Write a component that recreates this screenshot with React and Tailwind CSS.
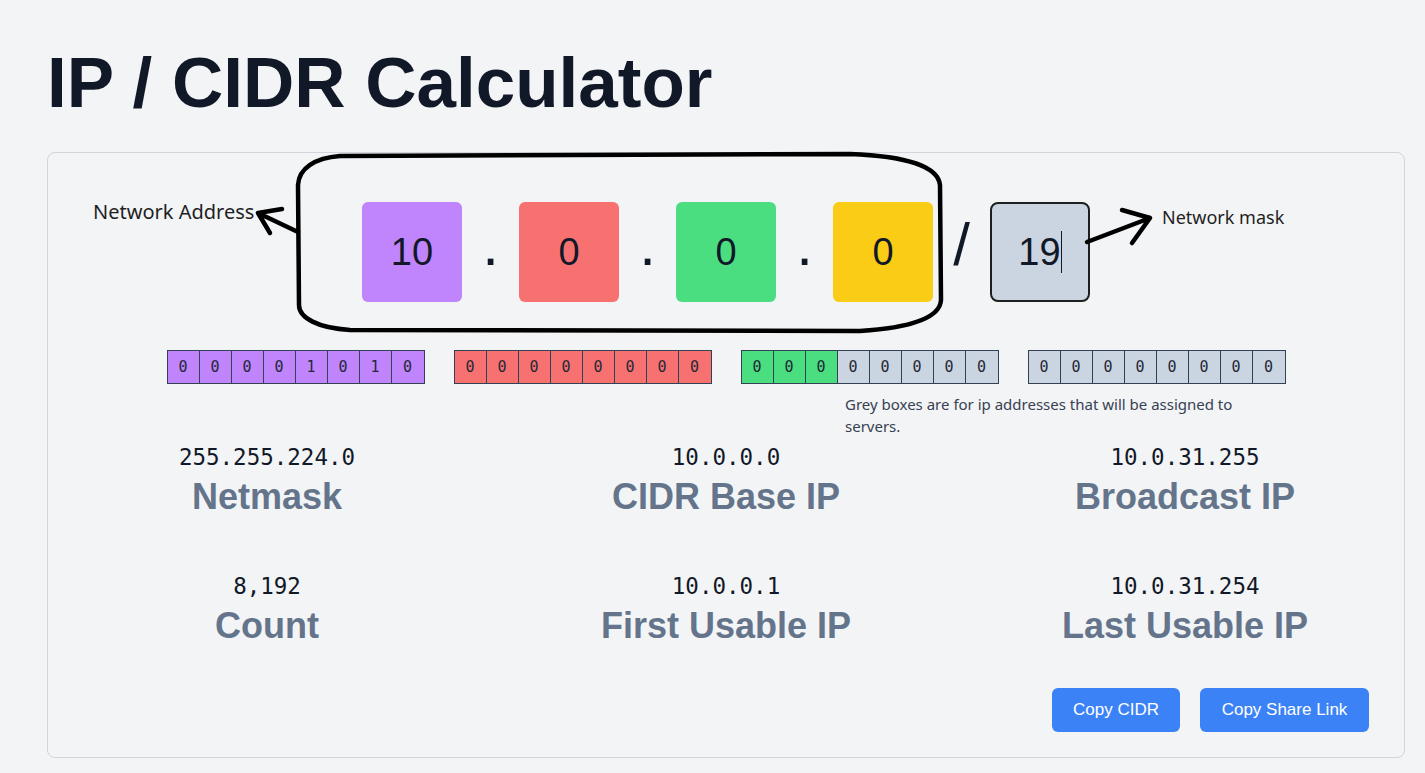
import React from 'react';

const octets = [
    { value: '10', bg: 'bg-[#c084fc]' },
    { value: '0', bg: 'bg-[#f87171]' },
    { value: '0', bg: 'bg-[#4ade80]' },
    { value: '0', bg: 'bg-[#facc15]' },
];

const toBits = (n) => n.toString(2).padStart(8, '0').split('');

const results = [
    { value: '255.255.224.0', label: 'Netmask' },
    { value: '10.0.0.0', label: 'CIDR Base IP' },
    { value: '10.0.31.255', label: 'Broadcast IP' },
    { value: '8,192', label: 'Count' },
    { value: '10.0.0.1', label: 'First Usable IP' },
    { value: '10.0.31.254', label: 'Last Usable IP' },
];

const Separator = ({ children }) => (
    <div className="w-[57px] mb-[14px] text-center text-6xl leading-none text-[#111827]">
        {children}
    </div>
);

const App = () => {
    const mask = 19;

    return (
        <div
            className="relative min-h-[773px] bg-[#f3f4f6] pl-[47px] pr-[20px] pt-[47px]"
            style={{ fontFamily: '"Liberation Sans", Arial, sans-serif' }}
        >
            <h1 className="text-[71px] leading-[72px] font-bold text-[#111827]">IP / CIDR Calculator</h1>

            <div className="mt-[33px] rounded-lg border border-[#d1d5db] px-[35px] pt-[49px] pb-[25px]">
                {/* Octet inputs */}
                <div className="flex items-center justify-center">
                    {octets.map((o, i) => (
                        <React.Fragment key={i}>
                            {i > 0 && <Separator>.</Separator>}
                            <div className={`w-[100px] h-[100px] rounded-md ${o.bg} flex items-center justify-center text-[38px] leading-none text-[#111827]`}>
                                {o.value}
                            </div>
                        </React.Fragment>
                    ))}
                    <Separator>/</Separator>
                    <div className="w-[100px] h-[100px] rounded-lg border-2 border-[#1f1f1f] bg-[#cbd5e1] flex items-center justify-center text-[38px] leading-none text-[#111827]">
                        <span>{mask}</span>
                        <span className="w-px h-[42px] bg-[#111827]"></span>
                    </div>
                </div>

                {/* Bits */}
                <div
                    className="mt-12 flex justify-center gap-[29px]"
                    style={{ fontFamily: '"DejaVu Sans Mono", monospace' }}
                >
                    {octets.map((o, i) => (
                        <div key={i} className="flex border border-[#334155]">
                            {toBits(parseInt(o.value, 10)).map((b, j) => {
                                const pos = i * 8 + j;
                                const color = pos < mask ? o.bg : 'bg-[#cbd5e1]';
                                return (
                                    <div
                                        key={j}
                                        className={`w-8 h-8 flex items-center justify-center text-[15px] text-[#1f2937] ${color} ${j < 7 ? 'border-r border-[#334155]' : ''}`}
                                    >
                                        {b}
                                    </div>
                                );
                            })}
                        </div>
                    ))}
                </div>

                <p
                    className="mt-[9px] ml-[762px] max-w-[410px] text-[15px] leading-[22px] text-[#374151]"
                    style={{ fontFamily: '"Noto Sans", sans-serif' }}
                >
                    Grey boxes are for ip addresses that will be assigned to servers.
                </p>

                {/* Results */}
                <div className="mt-[6px] grid grid-cols-3 gap-x-[91px] gap-y-[55px]">
                    {results.map((r) => (
                        <div key={r.label} className="flex flex-col items-center">
                            <div
                                className="text-[22.5px] leading-[28px] text-[#111827]"
                                style={{ fontFamily: '"DejaVu Sans Mono", monospace' }}
                            >
                                {r.value}
                            </div>
                            <div className="mt-1.5 text-4xl font-bold text-[#64748b]">{r.label}</div>
                        </div>
                    ))}
                </div>

                {/* Actions */}
                <div className="mt-[42px] flex justify-end gap-5">
                    <button className="w-[128px] h-[44px] rounded-md bg-[#3b82f6] text-[17px] text-white">Copy CIDR</button>
                    <button className="w-[169px] h-[44px] rounded-md bg-[#3b82f6] text-[17px] text-white">Copy Share Link</button>
                </div>
            </div>

            {/* Hand-drawn annotations */}
            <svg
                className="absolute left-0 top-0 w-[1425px] h-[773px] pointer-events-none"
                viewBox="0 0 1425 773"
                fill="none"
                stroke="black"
                strokeWidth="4.5"
                strokeLinecap="round"
                strokeLinejoin="round"
            >
                <path d="M340 156 L850 154 C905 156 938 166 940 185 L941 300 C940 318 910 328 860 331 L350 330 C318 328 299 318 299 305 L298 185 C299 168 315 158 340 156 Z" />
                <path d="M298 232 L258 213 M258 213 L282 209 M258 213 L270 233" />
                <path d="M1087 242 L1150 218 M1150 218 L1122 210 M1150 218 L1132 243" />
            </svg>
            <span
                className="absolute left-[93px] top-[202px] text-[20px] leading-none text-[#1f1f1f]"
                style={{ fontFamily: '"Noto Sans", sans-serif' }}
            >
                Network Address
            </span>
            <span
                className="absolute left-[1162px] top-[208px] text-[18px] leading-none text-[#1f1f1f]"
                style={{ fontFamily: '"Noto Sans", sans-serif' }}
            >
                Network mask
            </span>
        </div>
    );
};

export default App;
